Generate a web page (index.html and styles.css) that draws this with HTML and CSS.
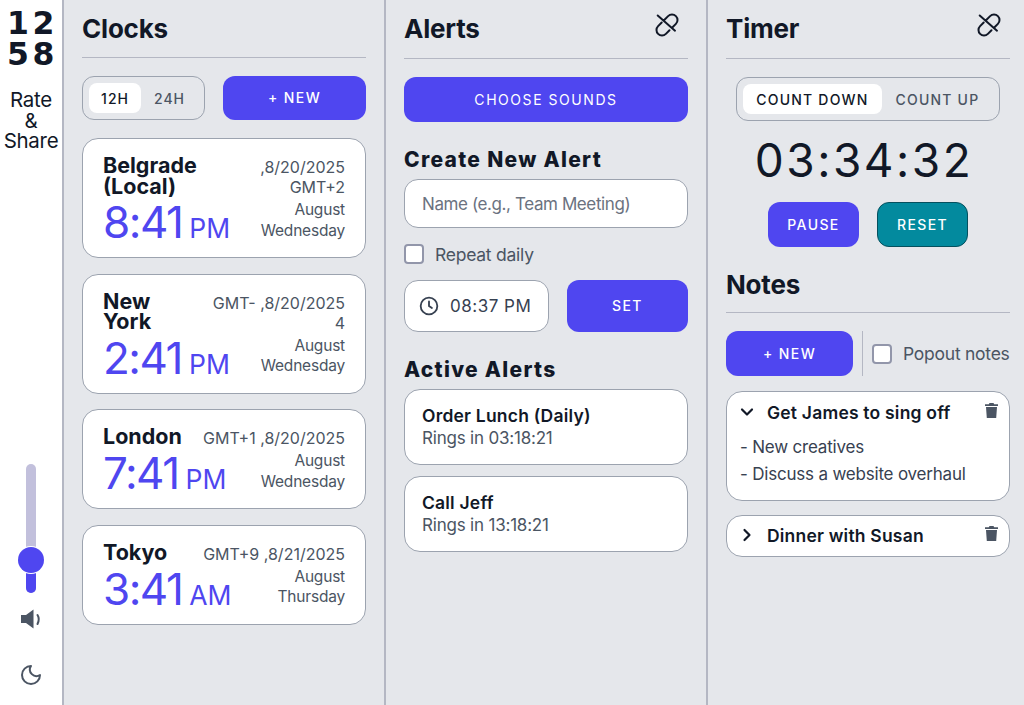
FILE: index.html
```html
<!DOCTYPE html>
<html lang="en">
<head>
<meta charset="utf-8">
<title>Clocks</title>
<link rel="stylesheet" href="styles.css">
</head>
<body>
<div class="app">
  <aside class="side">
    <div class="logo"><span>12</span><span>58</span></div>
    <div class="rate">Rate<br>&amp;<br>Share</div>
    <div class="side-bottom">
      <div class="slider"><div class="slider-fill"></div><div class="slider-thumb"></div></div>
      <svg class="side-icon vol" viewBox="0 0 24 24"><path d="M2 8H7L14.500 2.500V21.500L7 16H2z" fill="#4b5563"/><path d="M18.500 8Q21 12 18.500 17" fill="none" stroke="#4b5563" stroke-width="2" stroke-linecap="round"/></svg>
      <svg class="side-icon moon" viewBox="0 0 24 24"><path d="M12 3a6.500 6.500 0 0 0 9 9 9 9 0 1 1-9-9z" fill="none" stroke="#4b5563" stroke-width="2" stroke-linejoin="round"/></svg>
    </div>
  </aside>

  <section class="col">
    <header class="head head-clocks"><h1>Clocks</h1></header>
    <div class="clock-bar">
      <div class="seg seg-hours"><span class="seg-on">12H</span><span class="seg-off">24H</span></div>
      <button class="btn btn-grow">+ NEW</button>
    </div>
    <div class="clock-list">
      <article class="card clock">
        <div class="clock-row"><div class="city">Belgrade<br>(Local)</div><div class="info">,8/20/2025<br>GMT+2</div></div>
        <div class="clock-row row-time"><div class="time">8:41<small>PM</small></div><div class="info info-day">August<br>Wednesday</div></div>
      </article>
      <article class="card clock">
        <div class="clock-row"><div class="city">New<br>York</div><div class="info">GMT- ,8/20/2025<br>4</div></div>
        <div class="clock-row row-time"><div class="time">2:41<small>PM</small></div><div class="info info-day">August<br>Wednesday</div></div>
      </article>
      <article class="card clock">
        <div class="clock-row"><div class="city">London</div><div class="info">GMT+1 ,8/20/2025</div></div>
        <div class="clock-row row-time"><div class="time">7:41<small>PM</small></div><div class="info info-day">August<br>Wednesday</div></div>
      </article>
      <article class="card clock">
        <div class="clock-row"><div class="city">Tokyo</div><div class="info">GMT+9 ,8/21/2025</div></div>
        <div class="clock-row row-time"><div class="time">3:41<small>AM</small></div><div class="info info-day">August<br>Thursday</div></div>
      </article>
    </div>
  </section>

  <section class="col">
    <header class="head"><h1>Alerts</h1>
      <svg class="unlink" viewBox="0 0 24 24"><path d="M9.500 6.700L13.100 3.100A5.500 5.500 0 0 1 20.900 10.900L17.300 14.500M6.700 9.500L3.100 13.100A5.500 5.500 0 0 0 10.900 20.900L14.500 17.300M2.700 2.500L20 17.700" fill="none" stroke="#111827" stroke-width="2" stroke-linecap="round"/></svg>
    </header>
    <button class="btn btn-wide">CHOOSE SOUNDS</button>
    <h2 class="sub sub-create">Create New Alert</h2>
    <div class="input">Name (e.g., Team Meeting)</div>
    <label class="check check-repeat"><span class="box"></span>Repeat daily</label>
    <div class="set-row">
      <div class="time-input">
        <svg class="clock-icon" viewBox="0 0 24 24"><circle cx="12" cy="12" r="10" fill="none" stroke="#374151" stroke-width="2.200"/><path d="M12 6.500V12l3.500 2.500" fill="none" stroke="#374151" stroke-width="2.200" stroke-linecap="round"/></svg>
        08:37 PM
      </div>
      <button class="btn btn-set">SET</button>
    </div>
    <h2 class="sub sub-active">Active Alerts</h2>
    <div class="alerts">
      <div class="card alert"><strong>Order Lunch (Daily)</strong><span>Rings in 03:18:21</span></div>
      <div class="card alert"><strong>Call Jeff</strong><span>Rings in 13:18:21</span></div>
    </div>
  </section>

  <section class="col">
    <header class="head"><h1>Timer</h1>
      <svg class="unlink" viewBox="0 0 24 24"><path d="M9.500 6.700L13.100 3.100A5.500 5.500 0 0 1 20.900 10.900L17.300 14.500M6.700 9.500L3.100 13.100A5.500 5.500 0 0 0 10.900 20.900L14.500 17.300M2.700 2.500L20 17.700" fill="none" stroke="#111827" stroke-width="2" stroke-linecap="round"/></svg>
    </header>
    <div class="seg seg-timer"><span class="seg-on">COUNT DOWN</span><span class="seg-off">COUNT UP</span></div>
    <div class="countdown">03:34:32</div>
    <div class="timer-btns">
      <button class="btn btn-timer">PAUSE</button>
      <button class="btn btn-timer btn-reset">RESET</button>
    </div>
    <header class="head head-notes"><h1>Notes</h1></header>
    <div class="notes-bar">
      <button class="btn btn-note">+ NEW</button>
      <label class="check check-popout"><span class="box"></span>Popout notes</label>
    </div>
    <div class="notes">
      <div class="card note note-open">
        <div class="note-head">
          <svg class="chev" viewBox="0 0 14 14"><path d="M2 4.500l5 5 5-5" fill="none" stroke="#111827" stroke-width="2.200" stroke-linecap="round" stroke-linejoin="round"/></svg>
          <strong>Get James to sing off</strong>
          <svg class="trash" viewBox="0 0 13 15"><path d="M4.500 0h4l.7 1.200H13v1.800H0V1.200h3.800zM1 4h11l-.8 11H1.800z" fill="#4b5563"/></svg>
        </div>
        <p>- New creatives</p>
        <p>- Discuss a website overhaul</p>
      </div>
      <div class="card note note-closed">
        <div class="note-head">
          <svg class="chev" viewBox="0 0 14 14"><path d="M4.500 2l5 5-5 5" fill="none" stroke="#111827" stroke-width="2.200" stroke-linecap="round" stroke-linejoin="round"/></svg>
          <strong>Dinner with Susan</strong>
          <svg class="trash" viewBox="0 0 13 15"><path d="M4.500 0h4l.7 1.200H13v1.800H0V1.200h3.800zM1 4h11l-.8 11H1.800z" fill="#4b5563"/></svg>
        </div>
      </div>
    </div>
  </section>
</div>
</body>
</html>
```
FILE: styles.css
```css
* { box-sizing: border-box; }
html, body { margin: 0; height: 100%; }
body { font-family: "Inter", "Liberation Sans", sans-serif; color: #111827; background: #e5e7eb; overflow: hidden; }
.app { display: grid; grid-template-columns: 64px 322px 322px 316px; height: 705px; }

.side { background: #fff; border-right: 2px solid #b4b7c3; display: flex; flex-direction: column; align-items: center; }
.logo { margin-top: 8px; display: flex; flex-direction: column; font: 700 31.500px/31px "DejaVu Sans", sans-serif; letter-spacing: 3.500px; padding-left: 3px; }
.rate { margin-top: 20px; font-size: 20.500px; line-height: 20.500px; text-align: center; letter-spacing: -.3px; }
.side-bottom { margin-top: auto; display: flex; flex-direction: column; align-items: center; padding-bottom: 18px; }
.slider { width: 10px; height: 129px; border-radius: 5px; background: #c2c0dc; position: relative; }
.slider-fill { position: absolute; left: 0; right: 0; bottom: 0; height: 34px; border-radius: 0 0 5px 5px; background: #4f46f0; }
.slider-thumb { position: absolute; left: -8px; top: 83px; width: 26px; height: 26px; border-radius: 50%; background: #4f46f0; box-shadow: 0 0 0 1px #fff; }
.side-icon { display: block; width: 24px; height: 24px; }
.vol { margin-top: 14px; }
.moon { margin-top: 32px; }

.col { padding: 0 18px; border-right: 2px solid #b4b7c3; display: flex; flex-direction: column; min-width: 0; }
.col:last-child { border-right: 0; padding-right: 14px; }
.head { height: 59px; border-bottom: 1px solid #b4b7c3; display: flex; justify-content: space-between; align-items: flex-start; flex: none; }
.head-clocks { height: 58px; }
.head h1 { margin: 13px 0 0; font-size: 26px; line-height: 32px; font-weight: 700; letter-spacing: -.2px; }
.unlink { width: 24px; height: 24px; margin: 13px 9px 0 0; }

.btn { border: 0; background: #4f46f0; color: #fff; font: 500 14px/1 "Inter", sans-serif; letter-spacing: 1.400px; border-radius: 12px; padding: 0; }
.clock-bar { display: flex; gap: 18px; margin-top: 18px; }
.btn-grow { flex: 1; height: 44px; }
.seg { display: flex; border: 1px solid #9ca3af; border-radius: 12px; padding: 6px; font-size: 14px; letter-spacing: 1.200px; font-weight: 500; }
.seg span { display: flex; align-items: center; justify-content: center; }
.seg-on { background: #fff; border-radius: 8px; color: #111827; }
.seg-off { color: #4b5563; }
.seg-hours { width: 123px; height: 44px; }
.seg-hours span { width: 53px; letter-spacing: 1px; }
.seg-hours .seg-off { width: 58px; }
.clock-list { display: flex; flex-direction: column; gap: 15.500px; margin-top: 18px; }
.card { background: #fff; border: 1px solid #9ca3af; border-radius: 16px; }
.clock { padding: 18px 20px 12px; }
.clock-row { display: flex; justify-content: space-between; align-items: flex-start; }
.row-time { margin-top: 2px; }
.city { font-size: 21.500px; line-height: 20.500px; font-weight: 700; margin: -2px 0 0; }
.info { font-size: 16px; line-height: 20px; color: #4b5563; text-align: right; white-space: nowrap; }
.info-day { font-size: 15.500px; line-height: 20.500px; letter-spacing: -.2px; margin-top: 1px; }
.time { font-size: 44px; line-height: 46px; height: 46px; color: #4f46f0; letter-spacing: -1.500px; white-space: nowrap; }
.time small { font-size: 26.500px; letter-spacing: 0; margin-left: 7px; }

.btn-wide { height: 45px; margin-top: 18px; flex: none; font-weight: 400; letter-spacing: 1.550px; }
.sub { margin: 0; font-size: 21px; font-weight: 800; line-height: 26px; letter-spacing: 1.300px; }
.sub-create { margin-top: 25px; }
.input { margin-top: 6px; height: 49px; background: #fff; border: 1px solid #9ca3af; border-radius: 14px; padding-left: 17px; display: flex; align-items: center; font-size: 17px; color: #6b7280; letter-spacing: -.4px; }
.check { display: flex; align-items: center; font-size: 17.500px; color: #4b5563; letter-spacing: -.25px; }
.box { display: block; width: 20px; height: 20px; flex: none; background: #fff; border: 2px solid #9296aa; border-radius: 4px; }
.check-repeat { gap: 11px; margin-top: 16px; height: 20px; }
.set-row { display: flex; gap: 18px; margin-top: 16px; }
.time-input { width: 145px; height: 52px; background: #fff; border: 1px solid #9ca3af; border-radius: 14px; display: flex; align-items: center; gap: 11px; padding-left: 14px; font-size: 17px; color: #374151; letter-spacing: .5px; }
.clock-icon { width: 20px; height: 20px; flex: none; }
.btn-set { flex: 1; height: 52px; }
.sub-active { margin-top: 25px; }
.alerts { display: flex; flex-direction: column; gap: 11px; margin-top: 6px; }
.alert { height: 76px; padding-left: 17px; display: flex; flex-direction: column; justify-content: center; }
.alert strong { font-size: 17.500px; line-height: 23px; font-weight: 600; letter-spacing: .2px; }
.alert span { font-size: 17px; line-height: 23px; color: #4b5563; letter-spacing: -.2px; }

.seg-timer { width: 264px; height: 44px; margin: 18px 0 0 10px; flex: none; }
.seg-timer span { width: 140px; }
.seg-timer .seg-off { width: 112px; }
.countdown { margin-top: 11px; text-align: center; font-size: 46px; line-height: 56px; letter-spacing: 2.500px; padding-right: 8px; color: #111827; flex: none; }
.timer-btns { display: flex; gap: 18px; justify-content: center; margin-top: 14px; flex: none; }
.btn-timer { width: 91px; height: 45px; }
.btn-reset { background: #038a9e; border: 1px solid #05505e; }
.head-notes { margin-top: 12px; height: 54px; }
.head-notes h1 { margin-top: 10px; }
.notes-bar { display: flex; margin-top: 18px; align-items: stretch; flex: none; }
.btn-note { width: 127px; height: 45px; }
.check-popout { margin-left: 9px; border-left: 1px solid #b4b7c3; padding-left: 9px; gap: 11px; white-space: nowrap; letter-spacing: -.25px; }
.notes { display: flex; flex-direction: column; gap: 14px; margin-top: 15px; }
.note { padding: 8px 11px 0 13px; }
.note-closed { height: 42px; padding-top: 7px; }
.note-head { display: flex; align-items: center; height: 24px; margin-bottom: 10px; }
.chev { width: 14px; height: 14px; flex: none; margin-right: 13px; }
.note-head strong { font-size: 17.500px; font-weight: 600; flex: 1; letter-spacing: .2px; }
.trash { width: 13px; height: 15px; margin-top: -3px; flex: none; }
.note p { margin: 0; font-size: 17px; line-height: 27px; color: #374151; letter-spacing: -.2px; }
.note p:last-child { margin-bottom: 12px; }
```
